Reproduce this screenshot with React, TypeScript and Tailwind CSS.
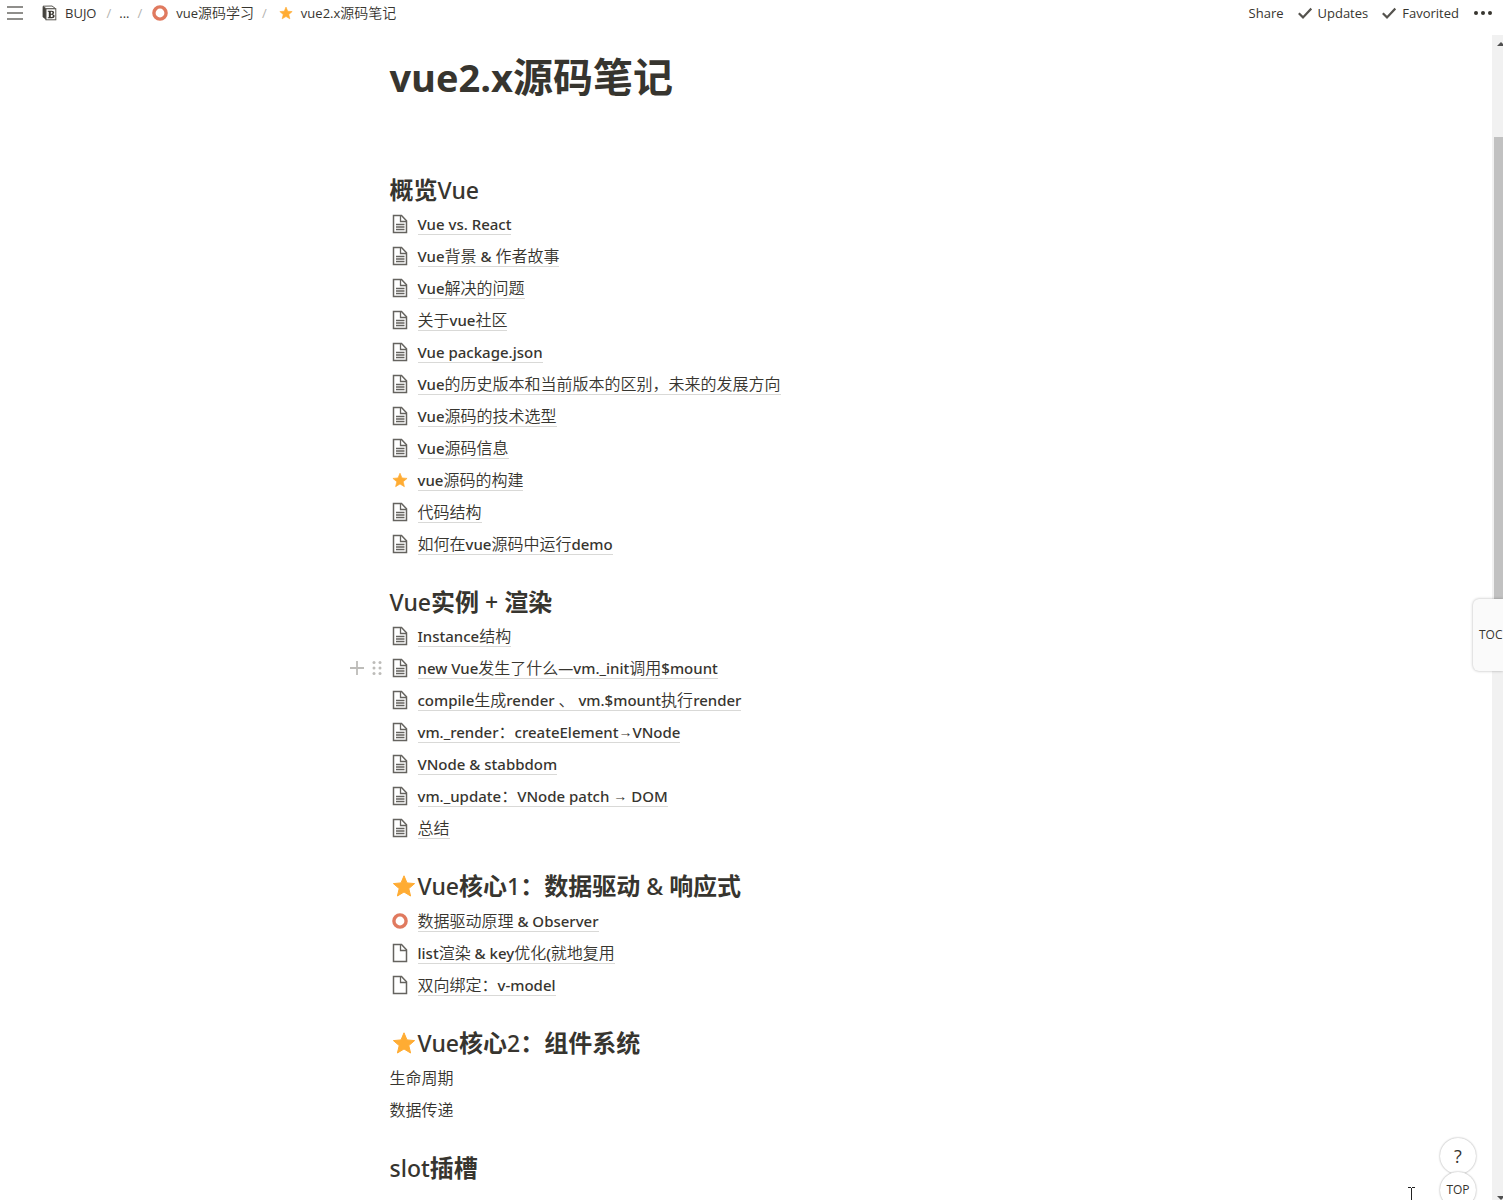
import type { ReactNode } from 'react';

const CJK = /([\u3000-\u303f\u4e00-\u9fff\uff00-\uffef]+)/;
const RUNS = /([\u3000-\u303f\u4e00-\u9fff\uff00-\uffef]+|→)/;

function Mixed({ text, latin, cjk }: { text: string; latin: string; cjk: string }) {
  return (
    <>
      {text.split(RUNS).filter(Boolean).map((run, i) => (
        <span key={i} className={run === '→' ? "font-['Liberation_Sans'] text-sm" : CJK.test(run) ? cjk : latin}>
          {run}
        </span>
      ))}
    </>
  );
}

function Star({ className }: { className: string }) {
  return (
    <svg viewBox="0 0 24 24" className={className} aria-hidden="true">
      <path
        d="M12 1.8 15 8.900l7.600.700-5.800 5 1.800 7.400L12 18l-6.600 4 1.800-7.400-5.800-5L9 8.900Z"
        fill="#ffac33"
        stroke="#ffac33"
        strokeWidth="1"
        strokeLinejoin="round"
      />
    </svg>
  );
}

function Ring({ className }: { className: string }) {
  return (
    <svg viewBox="0 0 16 16" className={className} aria-hidden="true">
      <circle cx="8" cy="8" r="6.1" fill="none" stroke="#e07a5f" strokeWidth="3.4" />
    </svg>
  );
}

function Doc({ lines }: { lines: boolean }) {
  return (
    <svg viewBox="0 0 16 20" className="h-5 w-4" fill="none" stroke="#65635f" aria-hidden="true">
      <path d="M1.5 1.5h8l5 5.3v11.7h-13Z" strokeWidth="1.5" />
      <path d="M8.500 1.500v6h6" strokeWidth="1.3" />
      {lines && <path d="M4 10.500h8.500M4 13h8.500M4 15.500h8.500" strokeWidth="1.3" />}
    </svg>
  );
}

function Check() {
  return (
    <svg viewBox="0 0 14 14" className="size-3.5" fill="none" stroke="#55534e" strokeWidth="2.2" aria-hidden="true">
      <path d="M.8 7.2 5 11.4 13.3 2.6" />
    </svg>
  );
}

type Icon = 'doc' | 'blank' | 'star' | 'ring';

function PageLink({ title, icon = 'doc', hovered = false }: { title: string; icon?: Icon; hovered?: boolean }) {
  return (
    <li className="relative flex h-8 items-center">
      {hovered && (
        <span className="absolute right-full mr-2 flex items-center gap-2">
          <button aria-label="Add block">
            <svg viewBox="0 0 14 14" className="size-3.5" stroke="#bdbcb9" strokeWidth="1.8">
              <path d="M7 0v14M0 7h14" />
            </svg>
          </button>
          <button aria-label="Drag block">
            <svg viewBox="0 0 10 14" className="h-3.5 w-2.5" fill="#bdbcb9">
              {[1.5, 7, 12.5].map((y) => (
                <g key={y}>
                  <circle cx="2" cy={y} r="1.5" />
                  <circle cx="8" cy={y} r="1.5" />
                </g>
              ))}
            </svg>
          </button>
        </span>
      )}
      <span className="mr-2 flex w-5 shrink-0 justify-center">
        {icon === 'star' && <Star className="size-4" />}
        {icon === 'ring' && <Ring className="size-4" />}
        {(icon === 'doc' || icon === 'blank') && <Doc lines={icon === 'doc'} />}
      </span>
      <a href="#" className="flex h-[21px] items-center whitespace-pre border-b border-[#d9d9d7] leading-5">
        <Mixed text={title} latin="font-['Noto_Sans'] text-[15px] font-medium" cjk="text-base font-[350]" />
      </a>
    </li>
  );
}

function Heading({ text, star = false }: { text: string; star?: boolean }) {
  return (
    <h2 className={star ? 'flex h-[37px] items-center' : 'flex h-9 items-center'}>
      {star && <Star className="mr-0.5 mb-0.5 ml-0.5 size-6" />}
      <span className="whitespace-pre pt-0.5 leading-8">
        <Mixed text={text} latin="font-['Noto_Sans'] text-[23px] font-medium" cjk="text-2xl font-bold" />
      </span>
    </h2>
  );
}

function Section({ text, star, children }: { text: string; star?: boolean; children?: ReactNode }) {
  return (
    <section className="mt-6">
      <Heading text={text} star={star} />
      <ul>{children}</ul>
    </section>
  );
}

function Slash() {
  return <span className="text-[#b4b3b0]">/</span>;
}

const overview = [
  'Vue vs. React',
  'Vue背景 & 作者故事',
  'Vue解决的问题',
  '关于vue社区',
  'Vue package.json',
  'Vue的历史版本和当前版本的区别，未来的发展方向',
  'Vue源码的技术选型',
  'Vue源码信息',
  'vue源码的构建',
  '代码结构',
  '如何在vue源码中运行demo',
];

const rendering = [
  'Instance结构',
  'new Vue发生了什么—vm._init调用$mount',
  'compile生成render 、 vm.$mount执行render',
  'vm._render：createElement→VNode',
  'VNode & stabbdom',
  'vm._update：VNode patch → DOM',
  '总结',
];

export default function App() {
  return (
    <div className="relative flex h-screen flex-col overflow-hidden bg-white font-['Open_Sans','Noto_Sans_CJK_SC',sans-serif] text-[#37352f]">
      <header className="flex h-[35px] shrink-0 items-start justify-between text-[13px] leading-[26px]">
        <nav className="flex items-center" aria-label="Breadcrumb">
          <button aria-label="Open sidebar" className="ml-[7px] mr-[19px]">
            <svg viewBox="0 0 16 14" className="h-3.5 w-4" stroke="#6b6a66" strokeWidth="1.5">
              <path d="M0 1h16M0 7h16M0 13h16" />
            </svg>
          </button>
          <a href="#" className="flex items-center gap-2">
            <svg viewBox="0 0 15 16" className="h-4 w-[15px]" aria-hidden="true">
              <path d="M1 1.2 10 1l3.600 2.600H4Z" fill="#fff" stroke="#5a5853" strokeWidth="1" />
              <path d="M.6 1.200 4 3.800v11L.6 12Z" fill="#45433e" />
              <rect x="4" y="3.8" width="9.8" height="11" fill="#fff" stroke="#5a5853" strokeWidth="1" />
              <path d="M5.800 5.700h4c3 0 3 3.300.8 3.500 2.900.2 2.700 4-.6 4H5.800v-1h1V6.700h-1Zm3 1v2h.8c1.200 0 1.200-2 0-2Zm0 3.100v2.300h.9c1.500 0 1.500-2.300 0-2.300Z" fill="#37352f" fillRule="evenodd" />
            </svg>
            <span>BUJO</span>
          </a>
          <span className="mx-2.5 flex gap-2">
            <Slash />
            <a href="#">...</a>
            <Slash />
          </span>
          <a href="#" className="flex items-center gap-2">
            <Ring className="size-4" />
            <span><Mixed text="vue源码学习" latin="" cjk="text-sm leading-[26px] font-[350]" /></span>
          </a>
          <span className="mx-2"><Slash /></span>
          <a href="#" className="ml-1 flex items-center gap-2">
            <Star className="size-3.5" />
            <span><Mixed text="vue2.x源码笔记" latin="" cjk="text-sm leading-[26px] font-[350]" /></span>
          </a>
        </nav>
        <div className="mr-[11px] flex items-center">
          <button>Share</button>
          <button className="ml-3.5 flex items-center gap-1.5"><Check />Updates</button>
          <button className="ml-3.5 flex items-center gap-1.5"><Check />Favorited</button>
          <button aria-label="More" className="ml-[15px]">
            <svg viewBox="0 0 18 4" className="h-1 w-[18px]" fill="#37352f">
              <circle cx="2" cy="2" r="2" /><circle cx="9" cy="2" r="2" /><circle cx="16" cy="2" r="2" />
            </svg>
          </button>
        </div>
      </header>

      <div className="flex min-h-0 flex-1">
        <main className="min-w-0 flex-1 overflow-hidden">
          <article className="mx-auto max-w-[713px]">
            <h1 className="mt-4 mb-[69px] text-[40px] font-bold leading-[52px]">
              <Mixed text="vue2.x源码笔记" latin="text-[38px]" cjk="" />
            </h1>
            <section>
              <Heading text="概览Vue" />
              <ul>
                {overview.map((t) => (
                  <PageLink key={t} title={t} icon={t === 'vue源码的构建' ? 'star' : 'doc'} />
                ))}
              </ul>
            </section>
            <Section text="Vue实例 + 渲染">
              {rendering.map((t, i) => (
                <PageLink key={t} title={t} hovered={i === 1} />
              ))}
            </Section>
            <Section text="Vue核心1：数据驱动 & 响应式" star>
              <PageLink title="数据驱动原理 & Observer" icon="ring" />
              <PageLink title="list渲染 & key优化(就地复用" icon="blank" />
              <PageLink title="双向绑定：v-model" icon="blank" />
            </Section>
            <Section text="Vue核心2：组件系统" star>
              <li className="flex h-8 items-center font-[350]">生命周期</li>
              <li className="flex h-8 items-center font-[350]">数据传递</li>
            </Section>
            <Section text="slot插槽" />
          </article>
        </main>

        <div className="flex w-[11px] shrink-0 flex-col overflow-hidden bg-[#f1f1f1]" aria-hidden="true">
          <svg viewBox="0 0 11 17" className="h-[17px] w-[11px] shrink-0" fill="#505050">
            <path d="M5 11 9 7l4 4Z" />
          </svg>
          <div className="mt-[85px] ml-0.5 h-[480px] bg-[#c1c1c1]" />
          <svg viewBox="0 0 11 17" className="mt-auto h-[17px] w-[11px] shrink-0" fill="#505050">
            <path d="M5 13h8l-4 4Z" />
          </svg>
        </div>
      </div>

      <button className="absolute top-[599px] right-0 h-[72px] w-[30px] overflow-hidden rounded-l-md bg-[#fafafa] pl-1.5 text-left text-xs shadow-[0_0_3px_rgba(0,0,0,0.3)]">
        TOC
      </button>
      <button aria-label="Help" className="absolute right-[27px] bottom-[26px] size-9 rounded-full bg-white text-lg shadow-[0_0_2px_rgba(0,0,0,0.4)]">
        ?
      </button>
      <button className="absolute right-[27px] -bottom-2 size-9 rounded-full bg-white text-xs shadow-[0_0_2px_rgba(0,0,0,0.4)]">
        TOP
      </button>
      <svg viewBox="0 0 7 13" className="absolute right-[88px] bottom-0 h-[13px] w-[7px]" stroke="#222" fill="none" aria-hidden="true">
        <path d="M0 .5h3M4 .5h3M3.500 1v12" />
      </svg>
    </div>
  );
}
